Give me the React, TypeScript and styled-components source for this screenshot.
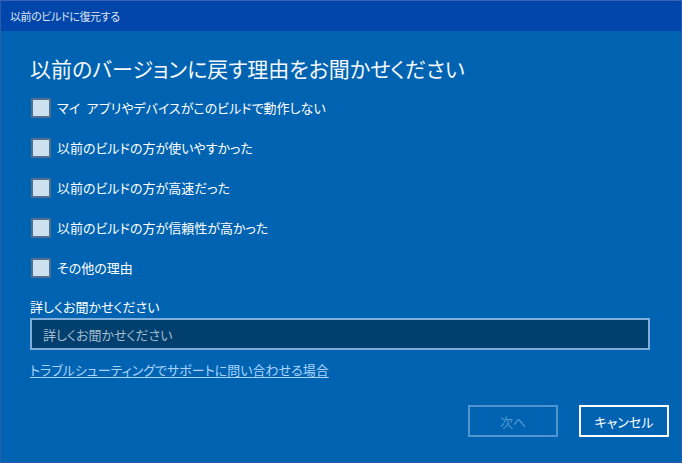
import styled, { createGlobalStyle } from "styled-components";

const GlobalStyle = createGlobalStyle`
  html, body {
    margin: 0;
    padding: 0;
    background: #0063b1;
  }
  body {
    font-family: "Noto Sans CJK JP", "Noto Sans", sans-serif;
    font-feature-settings: "palt";
  }
`;

const reasons = [
  "マイ\u2002アプリやデバイスがこのビルドで動作しない",
  "以前のビルドの方が使いやすかった",
  "以前のビルドの方が高速だった",
  "以前のビルドの方が信頼性が高かった",
  "その他の理由",
];

const App = () => {
  return (
    <>
      <GlobalStyle />
      <Window>
        <TitleBar>以前のビルドに復元する</TitleBar>
        <Body>
          <Heading>以前のバージョンに戻す理由をお聞かせください</Heading>
          <ReasonList>
            {reasons.map((reason) => (
              <Row key={reason}>
                <Box />
                <Label>{reason}</Label>
              </Row>
            ))}
          </ReasonList>
          <FieldLabel>詳しくお聞かせください</FieldLabel>
          <Input placeholder="詳しくお聞かせください" />
          <Link href="#">トラブルシューティングでサポートに問い合わせる場合</Link>
          <Footer>
            <Button disabled>次へ</Button>
            <Button>キャンセル</Button>
          </Footer>
        </Body>
      </Window>
    </>
  );
};

const Window = styled.div`
  width: 682px;
  height: 463px;
  box-sizing: border-box;
  border: 1px solid #2b5cab;
  border-top-color: #3b63b4;
  display: flex;
  flex-direction: column;
  background: #0063b1;
  overflow: hidden;
`;

const TitleBar = styled.div`
  height: 30px;
  flex: none;
  background: #0045aa;
  color: #dfe7f3;
  font-size: 11px;
  letter-spacing: -0.4px;
  line-height: 30px;
  padding-left: 9px;
`;

const Body = styled.div`
  flex: 1;
  display: flex;
  flex-direction: column;
  padding: 0 12px 0 29px;
  color: #ffffff;
`;

const Heading = styled.h1`
  margin: 23px 0 0 0;
  font-size: 21px;
  font-weight: 400;
  line-height: 28px;
  color: #f4f8fc;
`;

const ReasonList = styled.div`
  margin-top: 6px;
  display: flex;
  flex-direction: column;
`;

const Row = styled.div`
  height: 40px;
  display: flex;
  align-items: center;
  gap: 6px;
`;

const Box = styled.div`
  width: 20px;
  height: 20px;
  box-sizing: border-box;
  flex: none;
  margin-left: 1px;
  background: #cce0f0;
  border: 2px solid #4f6f8c;
`;

const Label = styled.span`
  font-size: 13px;
  line-height: 20px;
  color: #ffffff;
`;

const FieldLabel = styled.div`
  margin-top: 9px;
  font-size: 13px;
  line-height: 20px;
`;

const Input = styled.input`
  margin-top: 1px;
  width: 620px;
  height: 32px;
  box-sizing: border-box;
  border: 2px solid #80aedb;
  background: #003f6e;
  color: #ffffff;
  font-family: inherit;
  font-feature-settings: "palt";
  font-size: 13px;
  padding: 0 11px;
  outline: none;
  &::placeholder {
    color: #a5bccf;
  }
`;

const Link = styled.a`
  margin-top: 10px;
  align-self: flex-start;
  font-size: 13px;
  line-height: 20px;
  color: #a9d4ff;
  text-decoration: underline;
  text-underline-offset: 2px;
`;

const Footer = styled.div`
  margin-top: 25px;
  display: flex;
  justify-content: flex-end;
  gap: 21px;
`;

const Button = styled.button`
  width: 90px;
  height: 32px;
  box-sizing: border-box;
  background: transparent;
  border: 2px solid #ffffff;
  color: #ffffff;
  font-family: inherit;
  font-feature-settings: "palt";
  font-size: 13px;
  padding: 0;
  &:disabled {
    border-color: rgba(160, 200, 235, 0.5);
    color: rgba(160, 200, 235, 0.55);
  }
`;

export default App;
